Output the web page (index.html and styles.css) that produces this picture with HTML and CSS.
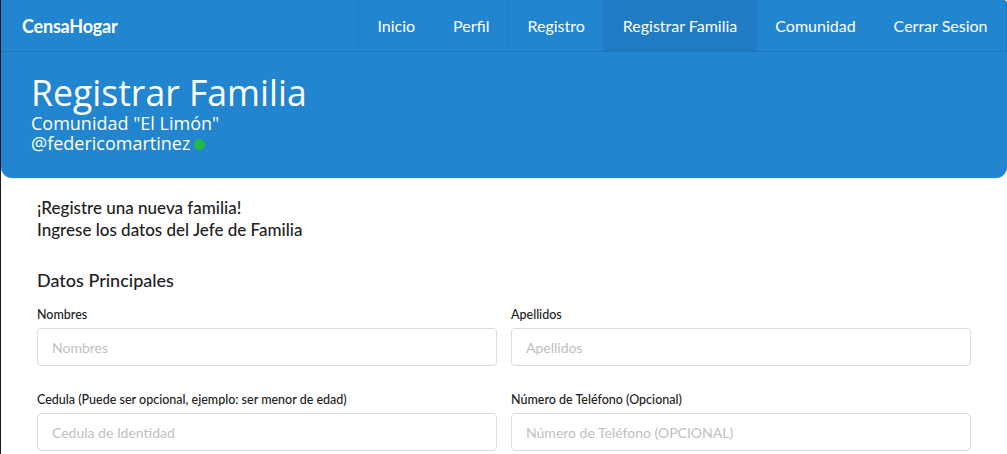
FILE: index.html
```html
<!DOCTYPE html>
<html lang="es">
<head>
<meta charset="utf-8">
<title>Registrar Familia - CensaHogar</title>
<link rel="stylesheet" href="styles.css">
</head>
<body>
<div class="page">
  <nav class="navbar">
    <div class="brand">CensaHogar</div>
    <ul class="menu">
      <li class="item">Inicio</li>
      <li class="item">Perfil</li>
      <li class="item">Registro</li>
      <li class="item active">Registrar Familia</li>
      <li class="item">Comunidad</li>
      <li class="item">Cerrar Sesion</li>
    </ul>
  </nav>
  <header class="hero">
    <h1 class="hero-title">Registrar Familia</h1>
    <div class="hero-sub">Comunidad "El Limón"</div>
    <div class="hero-sub">@federicomartinez <span class="online"></span></div>
  </header>
  <main class="content">
    <p class="intro">¡Registre una nueva familia!<br>Ingrese los datos del Jefe de Familia</p>
    <h3 class="section">Datos Principales</h3>
    <form class="form">
      <div class="field">
        <label class="label">Nombres</label>
        <input class="input" type="text" placeholder="Nombres">
      </div>
      <div class="field">
        <label class="label">Apellidos</label>
        <input class="input" type="text" placeholder="Apellidos">
      </div>
      <div class="field">
        <label class="label">Cedula (Puede ser opcional, ejemplo: ser menor de edad)</label>
        <input class="input" type="text" placeholder="Cedula de Identidad">
      </div>
      <div class="field">
        <label class="label">Número de Teléfono (Opcional)</label>
        <input class="input" type="text" placeholder="Número de Teléfono (OPCIONAL)">
      </div>
    </form>
  </main>
</div>
</body>
</html>
```

FILE: styles.css
```css
* { box-sizing: border-box; }
html, body { margin: 0; padding: 0; background: #fff; }
body { font-family: Lato, "Open Sans", sans-serif; color: #212121; }

.page {
  border-left: 1px solid #1b1b1b;
  min-height: 454px;
  overflow: hidden;
}

.navbar {
  display: flex;
  align-items: stretch;
  justify-content: space-between;
  height: 52px;
  background: #2185d0;
  border-bottom: 1px solid #1c77bb;
  border-top-right-radius: 4px;
  box-shadow: inset -1px 0 0 #1c75b8;
}
.brand {
  display: flex;
  align-items: center;
  padding-left: 21px;
  color: #fff;
  font-weight: 700;
  font-size: 18px;
  letter-spacing: -0.2px;
}
.menu {
  display: flex;
  margin: 0;
  padding: 0 1px 0 0;
  list-style: none;
}
.item {
  display: flex;
  align-items: center;
  padding: 0 18.5px;
  color: #fff;
  font-size: 16px;
  border-left: 1px solid #1f7ec5;
}
.item.active { background: #1f7cc2; }

.hero {
  background: #2185d0;
  color: #fff;
  padding: 19px 30px 25px;
  border-bottom-left-radius: 11px;
  border-bottom-right-radius: 11px;
  box-shadow: 0 1px 1px rgba(0,0,0,0.08);
}
.hero-title {
  margin: 0;
  font-family: "Open Sans", sans-serif;
  font-weight: 400;
  font-size: 35.6px;
  line-height: 42px;
}
.hero-sub {
  font-family: "Open Sans", sans-serif;
  font-size: 18px;
  line-height: 20px;
  display: flex;
  align-items: center;
}
.online {
  display: inline-block;
  width: 11px;
  height: 11px;
  border-radius: 50%;
  background: #21ba45;
  margin-left: 4px;
  margin-top: 2px;
}

.content { padding: 19px 36px 0; }
.intro {
  margin: 0;
  font-size: 17px;
  line-height: 22px;
  font-weight: 500;
}
.section {
  margin: 28px 0 16px;
  font-size: 18px;
  font-weight: 500;
}
.form {
  display: grid;
  grid-template-columns: 1fr 1fr;
  column-gap: 14px;
  row-gap: 26px;
}
.field { display: flex; flex-direction: column; }
.label {
  font-size: 12.5px;
  font-weight: 500;
  margin-bottom: 6px;
}
.input {
  height: 38px;
  width: 100%;
  border: 1px solid #dcdcdd;
  border-radius: 4px;
  padding: 0 14px;
  font-family: Lato, sans-serif;
  font-size: 14px;
  color: #222;
  outline: none;
}
.input::placeholder { color: #bfbfbf; }
```
